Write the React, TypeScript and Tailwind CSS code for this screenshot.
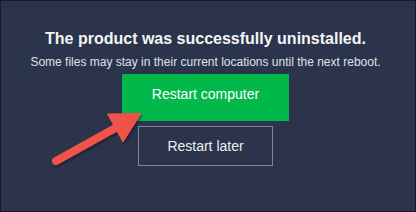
export default function App() {
  return (
    <div className="relative w-[416px] h-[212px] border border-[#161a22] bg-[#2b344b] font-['Liberation_Sans',Arial,sans-serif]">
      <div className="flex flex-col items-center pt-[28px] pr-[5px]">
        <h1 className="text-[16px] leading-[20px] font-bold text-[#f4f4f6]">
          The product was successfully uninstalled.
        </h1>
        <p className="mt-[5px] text-[12px] leading-[16px] text-[#dfe2e8]">
          Some files may stay in their current locations until the next reboot.
        </p>
        <button className="mt-[4px] w-[167px] h-[47px] pb-[8px] bg-[#00b84a] text-[14px] leading-[16px] text-white">
          Restart computer
        </button>
        <button className="mt-[5px] w-[135px] h-[40px] border border-[#7f8595] text-[14px] leading-[16px] text-[#eef0f3]">
          Restart later
        </button>
      </div>

      {/* callout arrow */}
      <svg className="absolute left-0 top-0 pointer-events-none" width="416" height="212" viewBox="0 0 416 212">
        <defs>
          <filter id="sh" x="-20%" y="-20%" width="140%" height="140%">
            <feDropShadow dx="1" dy="1.5" stdDeviation="1" floodColor="#000" floodOpacity="0.45" />
          </filter>
        </defs>
        <g filter="url(#sh)" fill="#f0524a" stroke="#f0524a">
          <line x1="55" y1="160" x2="118" y2="125" strokeWidth="8" strokeLinecap="round" />
          <polygon points="140,112.5 106.5,113 122,141" strokeWidth="1" strokeLinejoin="round" />
        </g>
      </svg>
    </div>
  )
}
